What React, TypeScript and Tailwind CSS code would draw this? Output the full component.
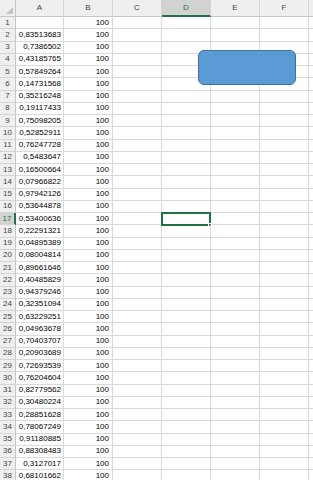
const VALUES: string[] = [
    "",
    "0,83513683",
    "0,7386502",
    "0,43185765",
    "0,57849264",
    "0,14731568",
    "0,35216248",
    "0,19117433",
    "0,75098205",
    "0,52852911",
    "0,76247728",
    "0,5483647",
    "0,16500664",
    "0,07966822",
    "0,97942126",
    "0,53644878",
    "0,53400636",
    "0,22291321",
    "0,04895389",
    "0,08004814",
    "0,89661646",
    "0,40485829",
    "0,94379246",
    "0,32351094",
    "0,63229251",
    "0,04963678",
    "0,70403707",
    "0,20903689",
    "0,72693539",
    "0,76204604",
    "0,82779562",
    "0,30480224",
    "0,28851628",
    "0,78067249",
    "0,91180885",
    "0,88308483",
    "0,3127017",
    "0,68101662",
];

const COLS = ["A", "B", "C", "D", "E", "F"];
const SEL_COL = "D";
const SEL_ROW = 17;

function ColHeader({ label }: { label: string }) {
    const active = label === SEL_COL;
    const width = label === "A" ? "w-[48px]" : "w-[49px]";
    return (
        <div
            className={`${width} shrink-0 h-full flex items-center justify-center border-r border-[#d4d4d4] ${
                active
                    ? "bg-[#d2d2d2] text-[#217346] border-b-2 border-b-[#217346]"
                    : "bg-[#efefef] text-[#444] border-b border-b-[#c6c6c6]"
            }`}
        >
            {label}
        </div>
    );
}

function Row({ n, value }: { n: number; value: string }) {
    const active = n === SEL_ROW;
    return (
        <div className="flex h-[12.25px]">
            {/* row number */}
            <div
                className={`w-[16px] shrink-0 flex items-center justify-center border-b border-[#d4d4d4] ${
                    active
                        ? "bg-[#d2d2d2] text-[#217346] border-r-2 border-r-[#217346]"
                        : "bg-[#efefef] text-[#444] border-r border-r-[#c6c6c6]"
                }`}
            >
                {n}
            </div>
            <div className="w-[48px] shrink-0 flex items-center justify-end pr-[2px] border-r border-b border-[#dadada] text-black">
                {value}
            </div>
            <div className="w-[49px] shrink-0 flex items-center justify-end pr-[3px] border-r border-b border-[#dadada] text-black">
                100
            </div>
            <div className="w-[49px] shrink-0 border-r border-b border-[#dadada]" />
            <div className="relative w-[49px] shrink-0 border-r border-b border-[#dadada]">
                {active && (
                    <div className="absolute -left-[1px] -top-[1px] w-[50px] h-[14px] border-2 border-[#217346]">
                        <div className="absolute -right-[3px] -bottom-[3px] w-[4px] h-[4px] bg-[#217346] border border-white" />
                    </div>
                )}
            </div>
            <div className="w-[49px] shrink-0 border-r border-b border-[#dadada]" />
            <div className="w-[49px] shrink-0 border-r border-b border-[#dadada]" />
            <div className="flex-1 border-b border-[#dadada]" />
        </div>
    );
}

export default function App() {
    return (
        <div
            className="relative w-[313px] h-[480px] overflow-hidden bg-white text-[8px] leading-none select-none"
            style={{ fontFamily: '"Liberation Sans", Arial, sans-serif' }}
        >
            {/* Column headers */}
            <div className="flex h-[17px]">
                <div className="relative w-[16px] shrink-0 bg-[#efefef] border-r border-b border-[#c6c6c6]">
                    <svg width="7" height="7" viewBox="0 0 7 7" className="absolute right-[2px] bottom-[2px]">
                        <polygon points="7,0 7,7 0,7" fill="#c4c4c4" />
                    </svg>
                </div>
                {COLS.map((c) => (
                    <ColHeader key={c} label={c} />
                ))}
                <div className="flex-1 bg-[#efefef] border-b border-[#c6c6c6]" />
            </div>

            {VALUES.map((v, i) => (
                <Row key={i} n={i + 1} value={v} />
            ))}

            {/* Rounded rectangle shape */}
            <div className="absolute left-[198px] top-[50px] w-[98px] h-[35px] rounded-[6px] bg-[#5b9bd5] border border-[#41719c]" />
        </div>
    );
}
